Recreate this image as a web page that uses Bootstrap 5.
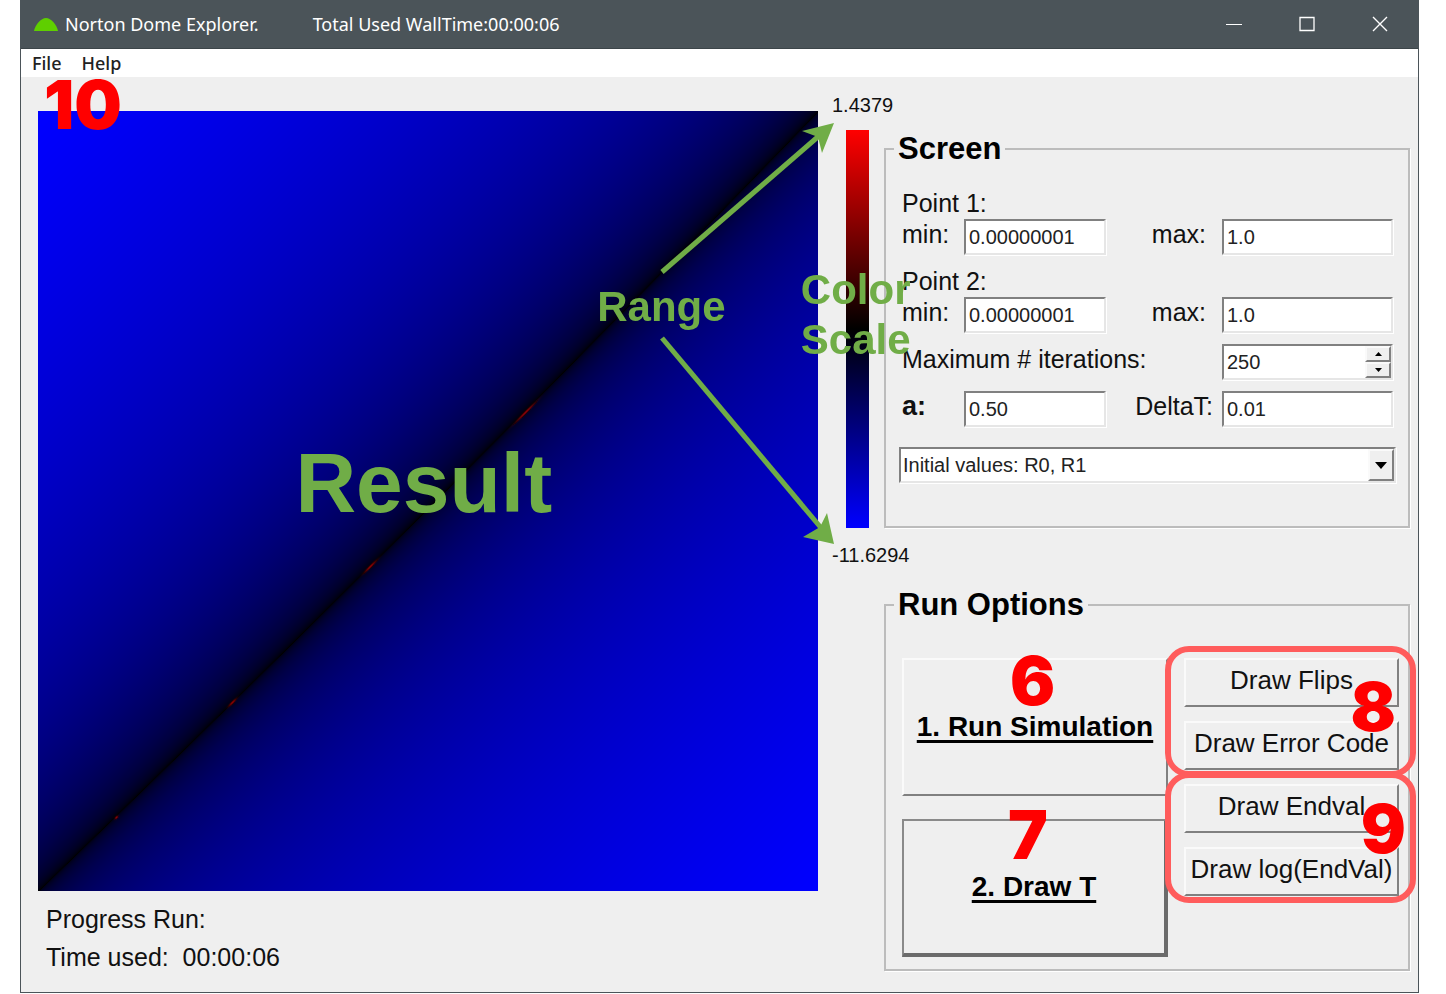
<!DOCTYPE html>
<html lang="en">
<head>
<meta charset="utf-8">
<meta name="viewport" content="width=device-width, initial-scale=1">
<title>Norton Dome Explorer</title>
<link href="https://cdn.jsdelivr.net/npm/bootstrap@5.3.0/dist/css/bootstrap.min.css" rel="stylesheet">
<style>
  body { background: #fff; color: #111; font-family: "Liberation Sans", Arial, sans-serif; font-size: 25px; line-height: 30px; padding: 0 27px 0 20px; }
  .app-window { border: 1px solid #4b5459; border-top: 0; background: #efefef; }
  .title-bar { background: #4b5459; color: #fff; height: 49px; padding: 0 26px 0 12px; font: 18px/24px "Noto Sans", "Open Sans", sans-serif; border-bottom: 1px solid #3c4549; }
  .title-bar .title-text { margin-left: 6px; }
  .title-bar .walltime { margin-left: 54px; }
  .caption-group { gap: 49px; }
  .caption-btn { border: 0; background: none; padding: 0; width: 24px; height: 24px; display: grid; place-items: center; }
  .menu-strip { background: #fff; height: 28px; padding: 0 11px; gap: 20px; font: 500 18px/28px "Noto Sans", "Open Sans", sans-serif; }
  .menu-strip a { color: #222; text-decoration: none; }
  .workspace { display: grid; grid-template-columns: 780fr 66px 526fr; padding: 16px 8px 20px 17px; }
  .plot-col { padding-top: 18px; }
  .plot canvas { display: block; width: 100%; aspect-ratio: 1; }
  .plot svg { position: absolute; inset: 0; width: 100%; height: 100%; overflow: visible; }
  .status { padding: 13px 8px 0; }
  .status p { margin: 0; white-space: pre; }
  .status p + p { margin-top: 8px; }

  .note { position: absolute; color: #70ad47; font-weight: 700; font-size: 42px; line-height: 50px; pointer-events: none; }
  .note-result { font-size: 84px; line-height: 96px; left: 33%; top: 41.5%; }
  .note-range { left: 71.7%; top: 21.9%; }
  .note-scale { left: 97.8%; top: 19.7%; z-index: 2; }
  .step { position: absolute; color: #f00; font: 900 67px/68px Inter, Roboto, sans-serif; pointer-events: none; z-index: 3; }
  .step-10 { left: 6px; top: -40px; }
  .step-6 { left: 108px; top: -11px; }
  .step-7 { left: 106px; top: -18px; }
  .step-8 { right: 3px; top: 15px; }
  .step-9 { right: -7px; top: 11px; }

  .scale-col { font-size: 20px; line-height: 24px; padding-left: 14px; }
  .scale-bar { width: 23px; height: 398px; margin: 13px 0 15px 14px; background: linear-gradient(#f00, #000 50%, #00f); }

  .group-box { border: 2px solid #bcbcbc; box-shadow: 1px 1px 0 #fff; min-width: 0; }
  .group-box + .group-box { margin-top: 59px; }
  .group-box legend { float: none; width: auto; margin: 0 0 0 8px; padding: 0 4px; font-size: 31px; line-height: 36px; font-weight: 700; color: #000; }
  .right-col { padding-top: 38px; min-width: 0; }
  .params { display: grid; grid-template-columns: 62px 142fr 116px 171fr; padding: 21px 15px 43px 16px; row-gap: 11px; }
  .params .point-title { grid-column: 1 / -1; margin-bottom: -10px; }
  .params .wide-label { grid-column: 1 / 4; }
  .params .pair-label { text-align: right; padding-right: 16px; }
  .params .delta-label { text-align: right; padding-right: 9px; }
  .params .a-label { font-weight: 700; font-size: 27px; }
  .classic { width: 100%; min-width: 0; height: 36px; font: 20px/24px "Liberation Sans", Arial, sans-serif; color: #222; background: #fff; border: 2px solid; border-color: #808080 #e6e6e6 #e6e6e6 #808080; border-radius: 0; padding: 0 3px; outline: 0; appearance: none; box-shadow: 1px 1px 0 #fff; }
  select.classic { padding: 0 2px; }
  .combo { position: relative; grid-column: 1 / -1; margin: 9px -3px 0; }
  .spin { position: relative; }
  .arrow-face { position: absolute; right: 2px; width: 26px; display: grid; place-items: center; padding: 0; background: #efefef; border: 2px solid; border-color: #fafafa #808080 #808080 #fafafa; pointer-events: none; }
  .combo .arrow-face { top: 2px; height: 32px; }
  .spin .arrow-face { height: 16px; }
  .spin .up { top: 2px; }
  .spin .down { top: 18px; }

  .actions { display: grid; grid-template-columns: 266fr 215fr; column-gap: 16px; padding: 35px 9px 12px 16px; }
  .main-stack { display: grid; row-gap: 23px; align-content: start; }
  .side-stack { display: grid; row-gap: 14px; align-content: start; }
  .raised { position: relative; width: 100%; background: #efefef; color: #111; border: 2px solid; border-color: #fafafa #808080 #808080 #fafafa; border-radius: 0; padding: 0; font-size: 26px; line-height: 30px; white-space: nowrap; }
  .main-action { height: 138px; font-size: 28px; font-weight: 700; color: #000; text-decoration: underline; text-decoration-thickness: 3px; text-underline-offset: 4px; }
  .main-action.is-default { border-width: 2px 4px 4px 2px; border-color: #8a8a8a #6b6b6b #6b6b6b #8a8a8a; }
  .small-action { height: 49px; padding-bottom: 5px; }
  .marked { position: relative; display: grid; row-gap: 14px; }
  .marked::after { content: ""; position: absolute; inset: -12px -17px -7px -19px; border: 6px solid #ff5c5c; border-radius: 24px; pointer-events: none; z-index: 2; }
</style>
</head>
<body>
<div class="app-window">
  <header class="title-bar d-flex align-items-center">
    <svg width="26" height="16" viewBox="0 0 26 16" class="flex-shrink-0" aria-hidden="true"><path d="M1 15C2 9 8 2 13 2s11 7 12 13z" fill="#5fcf00"/></svg>
    <span class="title-text">Norton Dome Explorer.</span>
    <span class="walltime">Total Used WallTime:00:00:06</span>
    <div class="caption-group ms-auto d-flex">
      <button class="caption-btn" aria-label="Minimize"><svg width="16" height="16"><path d="M0 8.500h16" stroke="#fff"/></svg></button>
      <button class="caption-btn" aria-label="Maximize"><svg width="16" height="16"><path d="M1 1.500h14v13H1z" fill="none" stroke="#fff" stroke-width="1.300"/></svg></button>
      <button class="caption-btn" aria-label="Close"><svg width="16" height="16"><path d="M1 1l14 14M15 1L1 15" stroke="#fff" stroke-width="1.400"/></svg></button>
    </div>
  </header>
  <nav class="menu-strip d-flex">
    <a href="#">File</a><a href="#">Help</a>
  </nav>

  <main class="workspace">
    <section class="plot-col">
      <div class="plot position-relative">
        <canvas id="field" width="780" height="780"></canvas>
        <svg viewBox="0 0 780 780" aria-hidden="true">
          <g fill="#70ad47" stroke="none">
            <path d="M624 161L782 24" stroke="#70ad47" stroke-width="5"/>
            <path d="M796 12L764 20L780 26L784 42z"/>
            <path d="M624 227L784 418" stroke="#70ad47" stroke-width="5"/>
            <path d="M796 433L789 402L782 416L765 426z"/>
          </g>
        </svg>
        <span class="note note-result">Result</span>
        <span class="note note-range">Range</span>
        <span class="note note-scale">Color<br>Scale</span>
        <span class="step step-10">10</span>
      </div>
      <div class="status">
        <p>Progress Run:</p>
        <p>Time used:  00:00:06</p>
      </div>
    </section>

    <section class="scale-col">
      <div>1.4379</div>
      <div class="scale-bar"></div>
      <div>-11.6294</div>
    </section>

    <section class="right-col">
      <fieldset class="group-box">
        <legend>Screen</legend>
        <div class="params">
          <div class="point-title">Point 1:</div>
          <label for="p1min">min:</label><input class="classic" id="p1min" value="0.00000001">
          <label class="pair-label" for="p1max">max:</label><input class="classic" id="p1max" value="1.0">
          <div class="point-title">Point 2:</div>
          <label for="p2min">min:</label><input class="classic" id="p2min" value="0.00000001">
          <label class="pair-label" for="p2max">max:</label><input class="classic" id="p2max" value="1.0">
          <label class="wide-label" for="iter">Maximum # iterations:</label>
          <div class="spin">
            <input class="classic" id="iter" value="250">
            <button class="arrow-face up" aria-label="Increase"><svg width="7" height="4"><path d="M0 4h7L3.500 0z"/></svg></button>
            <button class="arrow-face down" aria-label="Decrease"><svg width="7" height="4"><path d="M0 0h7L3.500 4z"/></svg></button>
          </div>
          <label class="a-label" for="aval">a:</label><input class="classic" id="aval" value="0.50">
          <label class="delta-label" for="dt">DeltaT:</label><input class="classic" id="dt" value="0.01">
          <div class="combo">
            <select class="classic" aria-label="Initial values"><option>Initial values: R0, R1</option></select>
            <span class="arrow-face"><svg width="12" height="7"><path d="M0 0h12L6 7z"/></svg></span>
          </div>
        </div>
      </fieldset>

      <fieldset class="group-box">
        <legend>Run Options</legend>
        <div class="actions">
          <div class="main-stack">
            <div class="position-relative"><button class="raised main-action">1. Run Simulation</button><span class="step step-6">6</span></div>
            <div class="position-relative"><button class="raised main-action is-default">2. Draw T</button><span class="step step-7">7</span></div>
          </div>
          <div class="side-stack">
            <div class="marked">
              <button class="raised small-action">Draw Flips</button>
              <button class="raised small-action">Draw Error Code</button>
              <span class="step step-8">8</span>
            </div>
            <div class="marked">
              <button class="raised small-action">Draw Endval</button>
              <button class="raised small-action">Draw log(EndVal)</button>
              <span class="step step-9">9</span>
            </div>
          </div>
        </div>
      </fieldset>
    </section>
  </main>
</div>
<script src="https://cdn.jsdelivr.net/npm/bootstrap@5.3.0/dist/js/bootstrap.bundle.min.js"></script>
<script>
  // Blue grows with the separation of the two starting points; a dark ridge
  // follows the diagonal, with a few small positive (red) islands on it.
  const canvas = document.getElementById('field');
  const ctx = canvas.getContext('2d');
  const n = canvas.width;
  const img = ctx.createImageData(n, n);
  const islands = [[487, 301, 13], [332, 455, 8], [194, 591, 5], [78, 706, 2]];
  for (let y = 0; y < n; y++) {
    for (let x = 0; x < n; x++) {
      const u = x / n, v = 1 - y / n;
      const d = v - u + 0.036 * u * (1 - u);
      const a = Math.abs(d);
      const i = (y * n + x) * 4;
      let red = 0;
      for (const [cx, cy, len] of islands) {
        const along = ((x - cx) - (y - cy)) / 1.414, across = ((x - cx) + (y - cy)) / 1.414;
        red += 140 * Math.exp(-(along * along) / (len * len) - across * across / 1.2);
      }
      const blue = d > 0 ? 268 * Math.pow(a, 0.38) - 12 : 255 * Math.pow(a, 0.35);
      img.data[i] = red;
      img.data[i + 2] = Math.max(0, blue) * (red > 20 ? 0.3 : 1);
      img.data[i + 3] = 255;
    }
  }
  ctx.putImageData(img, 0, 0);
</script>
</body>
</html>
